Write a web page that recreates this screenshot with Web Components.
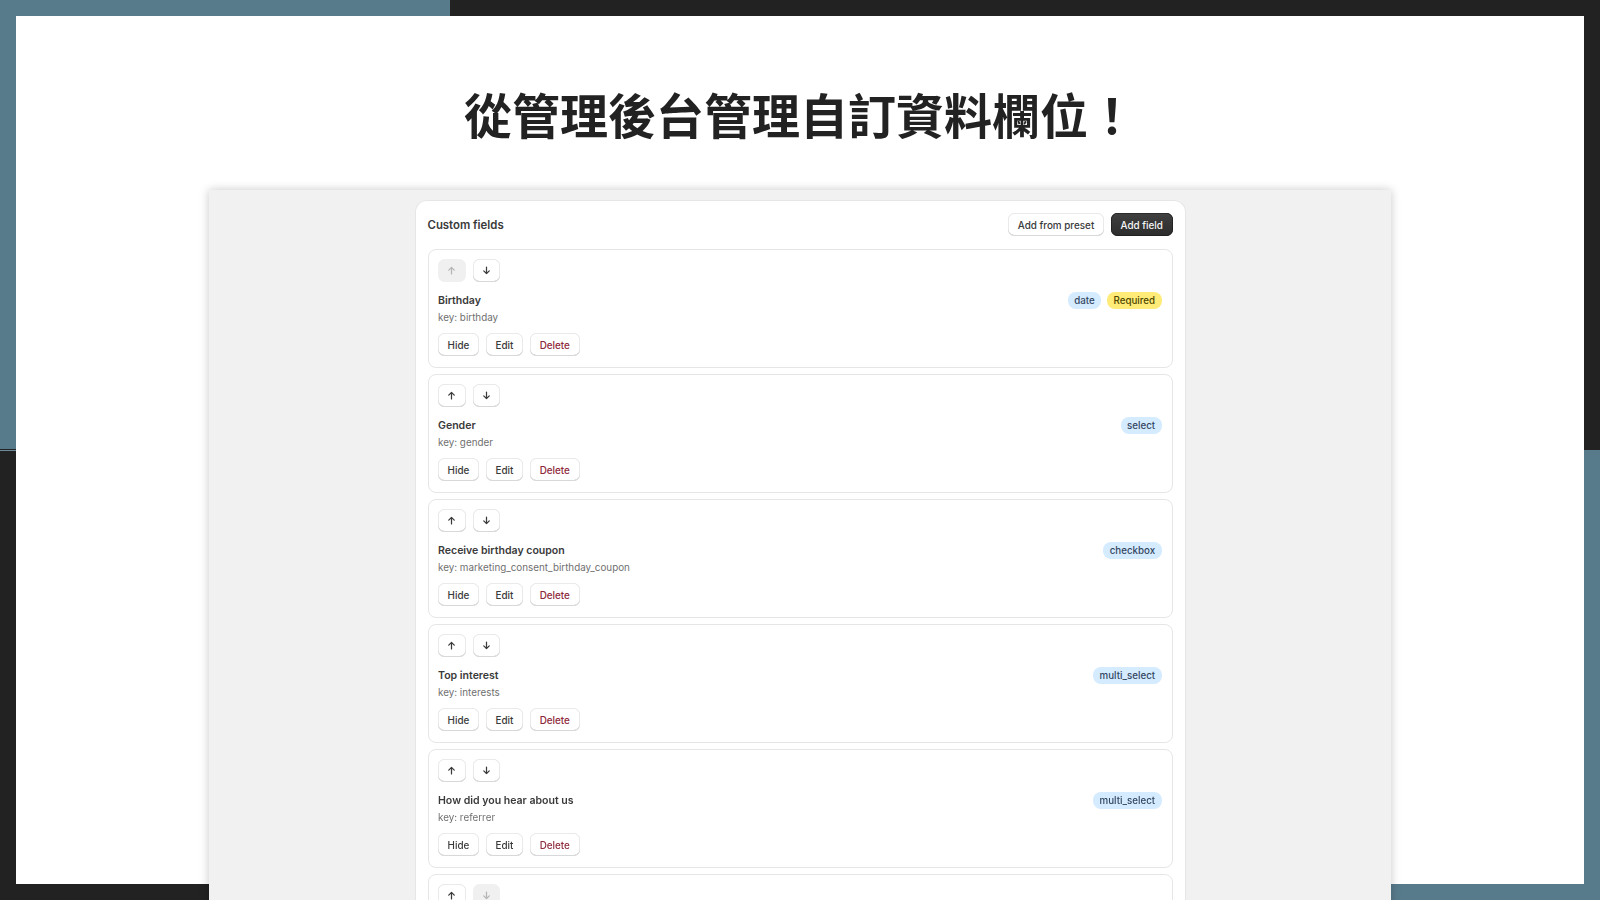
<!DOCTYPE html>
<html lang="zh-Hant">
<head>
<meta charset="utf-8">
<title>Custom fields</title>
<style>
  html, body { margin: 0; height: 100%; overflow: hidden; }
  body { font-family: Inter, "Liberation Sans", sans-serif; }
</style>
</head>
<body>
<slide-page>
  <span slot="title">從管理後台管理自訂資料欄位！</span>
  <fields-card>
    <field-row name="Birthday" field-key="birthday" type="date" required first></field-row>
    <field-row name="Gender" field-key="gender" type="select"></field-row>
    <field-row name="Receive birthday coupon" field-key="marketing_consent_birthday_coupon" type="checkbox"></field-row>
    <field-row name="Top interest" field-key="interests" type="multi_select"></field-row>
    <field-row name="How did you hear about us" field-key="referrer" type="multi_select"></field-row>
    <field-row last></field-row>
  </fields-card>
</slide-page>

<script>
const slideTemplate = document.createElement('template');

slideTemplate.innerHTML = /* html */`
  <style>
    :host {
      display: block;
      box-sizing: border-box;
      width: 1600px;
      height: 900px;
      padding: 16px 16px 0;
      overflow: hidden;
      background:
        linear-gradient(#587b8c, #587b8c) 0 0 / 450px 449px no-repeat,
        linear-gradient(#6b8b99, #6b8b99) 0 450px / 450px 1px no-repeat,
        linear-gradient(#587b8c, #587b8c) 450px 450px / 1150px 450px no-repeat,
        #222222;
    }
    .sheet {
      height: 868px;
      background: #fff;
      display: flex;
      flex-direction: column;
      align-items: center;
    }
    h1 {
      margin: 0;
      padding-top: 70px;
      height: 114px;
      box-sizing: border-box;
      font: 700 48px/54px "Noto Sans CJK TC", "Noto Sans CJK SC", sans-serif;
      color: #222222;
      white-space: nowrap;
      filter: blur(0.4px);
    }
    .panel {
      flex: none;
      box-sizing: border-box;
      width: 1182px;
      height: 730px;
      margin-top: 60px;
      padding-top: 10px;
      background: #f1f1f1;
      box-shadow: 0 0 9px rgba(0, 0, 0, 0.22);
      display: flex;
      justify-content: center;
    }
  </style>
  <div class="sheet">
    <h1><slot name="title"></slot></h1>
    <div class="panel"><slot></slot></div>
  </div>
`;

class SlidePage extends HTMLElement {
  constructor() {
    super();
    this.attachShadow({ mode: 'open' });
    this.shadowRoot.appendChild(slideTemplate.content.cloneNode(true));
  }
}

const cardTemplate = document.createElement('template');

cardTemplate.innerHTML = /* html */`
  <style>
    :host {
      display: block;
      box-sizing: border-box;
      width: 771px;
      padding: 12px;
      background: #fff;
      border: 1px solid #e6e6e6;
      border-bottom: 0;
      border-radius: 12px 12px 0 0;
      font-family: Inter, "Liberation Sans", sans-serif;
      filter: blur(0.4px);
    }
    header {
      display: flex;
      align-items: center;
      justify-content: space-between;
      height: 23px;
      margin-bottom: 13px;
    }
    h2 {
      margin: 0;
      font-size: 11.4px;
      font-weight: 600;
      color: #3a3a3a;
    }
    .actions { display: flex; gap: 7px; }
    .list { display: flex; flex-direction: column; gap: 6px; }
  </style>
  <header>
    <h2>Custom fields</h2>
    <div class="actions">
      <ui-button>Add from preset</ui-button>
      <ui-button variant="primary">Add field</ui-button>
    </div>
  </header>
  <div class="list"><slot></slot></div>
`;

class FieldsCard extends HTMLElement {
  constructor() {
    super();
    this.attachShadow({ mode: 'open' });
    this.shadowRoot.appendChild(cardTemplate.content.cloneNode(true));
  }
}

const buttonTemplate = document.createElement('template');

buttonTemplate.innerHTML = /* html */`
  <style>
    :host {
      display: inline-flex;
      align-items: center;
      justify-content: center;
      box-sizing: border-box;
      height: 23px;
      padding: 0 9.6px;
      background: #fff;
      border-radius: 6.5px;
      box-shadow: inset 0 0 0 0.75px #e3e3e3, inset 0 -1px 0 #b5b5b5;
      font-size: 9.9px;
      font-weight: 500;
      color: #3a3a3a;
      white-space: nowrap;
    }
    :host([variant="primary"]) {
      background: linear-gradient(#404040, #2c2c2c);
      box-shadow: inset 0 0 0 0.75px #1c1c1c, inset 0 1px 0 #5a5a5a;
      color: #f5f5f5;
    }
    :host([variant="critical"]) { color: #8e2a3a; }
    :host([square]) { width: 27.5px; padding: 0; }
    :host([disabled]) {
      background: #f0f0f0;
      box-shadow: none;
      color: #b5b5b5;
    }
  </style>
  <slot></slot>
`;

class UiButton extends HTMLElement {
  constructor() {
    super();
    this.attachShadow({ mode: 'open' });
    this.shadowRoot.appendChild(buttonTemplate.content.cloneNode(true));
  }
}

const badgeTemplate = document.createElement('template');

badgeTemplate.innerHTML = /* html */`
  <style>
    :host {
      display: inline-flex;
      align-items: center;
      box-sizing: border-box;
      height: 16.5px;
      padding: 0 6.4px;
      border-radius: 8px;
      background: #d5ebff;
      color: #33475f;
      font-size: 9.75px;
      font-weight: 450;
    }
    :host([tone="warning"]) { background: #ffeb78; color: #4f4700; }
  </style>
  <slot></slot>
`;

class UiBadge extends HTMLElement {
  constructor() {
    super();
    this.attachShadow({ mode: 'open' });
    this.shadowRoot.appendChild(badgeTemplate.content.cloneNode(true));
  }
}

const upArrow = /* html */`<svg width="11" height="11" viewBox="0 0 16 16" fill="none" stroke="currentColor" stroke-width="1.8" stroke-linecap="round" stroke-linejoin="round"><path d="M8 13V3.5M4 7.5l4-4 4 4"/></svg>`;
const downArrow = /* html */`<svg width="11" height="11" viewBox="0 0 16 16" fill="none" stroke="currentColor" stroke-width="1.8" stroke-linecap="round" stroke-linejoin="round"><path d="M8 3v9.5M4 8.5l4 4 4-4"/></svg>`;

const rowTemplate = document.createElement('template');

rowTemplate.innerHTML = /* html */`
  <style>
    :host {
      display: block;
      box-sizing: border-box;
      height: 119px;
      padding: 9px 10px 10px 9.5px;
      border: 1px solid #e6e6e6;
      border-radius: 8px;
      background: #fff;
    }
    .move { display: flex; gap: 7px; }
    .buttons { display: flex; gap: 7px; margin-top: 8px; }
    .info {
      display: flex;
      justify-content: space-between;
      margin-top: 10px;
    }
    .name {
      font-size: 10.55px;
      line-height: 17px;
      font-weight: 600;
      color: #3a3a3a;
    }
    .key {
      font-size: 9.85px;
      line-height: 16px;
      color: #707070;
    }
    .badges { display: flex; gap: 6px; align-items: flex-start; }
  </style>
  <div class="move">
    <ui-button square class="up">${upArrow}</ui-button>
    <ui-button square class="down">${downArrow}</ui-button>
  </div>
  <div class="info">
    <div>
      <div class="name"></div>
      <div class="key"></div>
    </div>
    <div class="badges"></div>
  </div>
  <div class="buttons">
    <ui-button>Hide</ui-button>
    <ui-button>Edit</ui-button>
    <ui-button variant="critical">Delete</ui-button>
  </div>
`;

class FieldRow extends HTMLElement {
  constructor() {
    super();
    this.attachShadow({ mode: 'open' });
    this.shadowRoot.appendChild(rowTemplate.content.cloneNode(true));
  }

  connectedCallback() {
    const root = this.shadowRoot;

    if (this.hasAttribute('first')) {
      root.querySelector('.up').setAttribute('disabled', '');
    }

    // the last row runs off the bottom of the page, only its arrows show
    if (this.hasAttribute('last')) {
      root.querySelector('.down').setAttribute('disabled', '');
      root.querySelector('.info').remove();
      root.querySelector('.buttons').remove();
      return;
    }

    root.querySelector('.name').textContent = this.getAttribute('name');
    root.querySelector('.key').textContent = `key: ${this.getAttribute('field-key')}`;

    const badges = root.querySelector('.badges');
    const typeBadge = document.createElement('ui-badge');
    typeBadge.textContent = this.getAttribute('type');
    badges.appendChild(typeBadge);

    if (this.hasAttribute('required')) {
      const requiredBadge = document.createElement('ui-badge');
      requiredBadge.setAttribute('tone', 'warning');
      requiredBadge.textContent = 'Required';
      badges.appendChild(requiredBadge);
    }
  }
}

customElements.define('ui-button', UiButton);
customElements.define('ui-badge', UiBadge);
customElements.define('field-row', FieldRow);
customElements.define('fields-card', FieldsCard);
customElements.define('slide-page', SlidePage);
</script>
</body>
</html>
